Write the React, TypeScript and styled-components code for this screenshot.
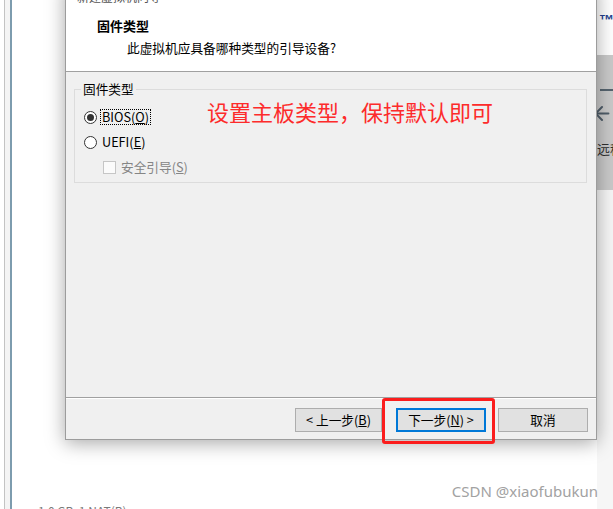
import React from "react";
import styled, { createGlobalStyle } from "styled-components";
import { ArrowLeft } from "lucide-react";

const GlobalStyle = createGlobalStyle`
  html, body {
    margin: 0;
    padding: 0;
    background: #ffffff;
    overflow: hidden;
  }
  body {
    font-family: "Noto Sans CJK SC", "Noto Sans", sans-serif;
  }
  * { box-sizing: border-box; }
`;

const UI_FONT = `"Noto Sans CJK SC", "Noto Sans", sans-serif`;

const Page = styled.div`
  position: relative;
  width: 613px;
  height: 509px;
  overflow: hidden;
  display: flex;
  background: #ffffff;
`;

/* ---------- background window ---------- */
const OuterRail = styled.div`
  margin-left: 4px;
  width: 6px;
  border-left: 1px solid #c3c3c3;
  background: #f4f4f4;
  flex: none;
`;

const InnerRail = styled.div`
  width: 2px;
  background: #7d9cae;
  flex: none;
`;

const BackContent = styled.div`
  flex: 1;
  display: flex;
  flex-direction: column;
  justify-content: flex-end;
  padding-left: 26px;
  background: #ffffff;
`;

const BackText = styled.div`
  font-family: ${UI_FONT};
  font-size: 12px;
  line-height: 16px;
  color: #7a7a7a;
  margin-bottom: -10px;
  white-space: nowrap;
`;

const RightPanel = styled.div`
  width: 16px;
  flex: none;
  display: flex;
  flex-direction: column;
  overflow: hidden;
`;

const LogoArea = styled.div`
  height: 55px;
  background: #ffffff;
  padding: 6px 0 0 2px;
`;

const Trademark = styled.span`
  font-family: "Liberation Sans", sans-serif;
  font-size: 15px;
  font-weight: 700;
  color: #23408e;
  line-height: 16px;
`;

const GrayPanel = styled.div`
  height: 135px;
  background: #c9c9c9;
  display: flex;
  flex-direction: column;
  padding-left: 3px;
`;

const DarkBar = styled.div`
  margin-top: 34px;
  height: 2px;
  background: #56646f;
`;

const ArrowBox = styled.div`
  margin-top: 9px;
  margin-left: -9px;
  height: 27px;
  color: #4f5d69;
  display: flex;
`;

const PanelLabel = styled.div`
  margin-top: 14px;
  margin-left: -3px;
  font-family: ${UI_FONT};
  font-size: 13px;
  line-height: 16px;
  color: #2f2f2f;
  white-space: nowrap;
`;

const PanelRest = styled.div`
  flex: 1;
  background: #f6f6f6;
`;

/* ---------- dialog window ---------- */
const Dialog = styled.div`
  position: absolute;
  left: 65px;
  top: -19px;
  width: 532px;
  height: 459px;
  border: 1px solid #9c9c9c;
  background: #f0f0f0;
  box-shadow: 0 3px 18px rgba(0, 0, 0, 0.35);
  display: flex;
  flex-direction: column;
  font-family: ${UI_FONT};
  font-size: 12.7px;
  color: #000;
`;

const TitleBar = styled.div`
  height: 30px;
  flex: none;
  background: #ffffff;
  padding-left: 11px;
  line-height: 30px;
  font-size: 12px;
  color: #555;
`;

const Header = styled.div`
  flex: none;
  height: 60px;
  background: #ffffff;
  border-bottom: 1px solid #a0a0a0;
  padding: 6px 0 0 31px;
  display: flex;
  flex-direction: column;
  gap: 6px;
`;

const HeaderTitle = styled.div`
  font-size: 13px;
  font-weight: 700;
  line-height: 16px;
`;

const HeaderSubtitle = styled.div`
  line-height: 16px;
  padding-left: 30px;
`;

const Body = styled.div`
  flex: 1;
  padding: 9px 9px 0 8px;
  border-bottom: 1px solid #a0a0a0;
`;

const Group = styled.fieldset`
  margin: 0;
  padding: 0;
  border: 1px solid #dcdcdc;
  min-inline-size: 0;
`;

const Legend = styled.legend`
  margin-left: 6px;
  padding: 0 2px;
  line-height: 16px;
`;

const Options = styled.div`
  display: flex;
  flex-direction: column;
  padding: 7.5px 0 2px 9px;
`;

const Row = styled.div<{ $indent?: number }>`
  height: 25px;
  display: flex;
  align-items: center;
  padding-left: ${(p) => p.$indent ?? 0}px;
`;

const RadioCircle = styled.span<{ $checked?: boolean }>`
  width: 13px;
  height: 13px;
  border-radius: 50%;
  border: 1px solid #333333;
  background: #ffffff;
  display: flex;
  align-items: center;
  justify-content: center;
  flex: none;
  &::after {
    content: "";
    width: 7px;
    height: 7px;
    border-radius: 50%;
    background: ${(p) => (p.$checked ? "#333333" : "transparent")};
  }
`;

const CheckBox = styled.span`
  width: 13px;
  height: 13px;
  border: 1px solid #c6c6c6;
  background: #fbfbfb;
  flex: none;
`;

const OptionLabel = styled.span<{ $focus?: boolean; $disabled?: boolean }>`
  margin-left: 3px;
  padding: 0 1px;
  line-height: 14px;
  border: 1px dotted ${(p) => (p.$focus ? "#000" : "transparent")};
  color: ${(p) => (p.$disabled ? "#858585" : "#000")};
`;

const Footer = styled.div`
  flex: none;
  height: 41px;
  border-top: 1px solid #ffffff;
  display: flex;
  justify-content: flex-end;
  align-items: flex-start;
  padding: 9px 8px 0 0;
`;

const Button = styled.div<{ $width: number; $gap: number; $primary?: boolean }>`
  width: ${(p) => p.$width}px;
  height: 24px;
  margin-left: ${(p) => p.$gap}px;
  background: #e1e1e1;
  border: ${(p) => (p.$primary ? "2px solid #0078d7" : "1px solid #adadad")};
  display: flex;
  align-items: center;
  justify-content: center;
  white-space: nowrap;
  line-height: 16px;
  color: #000;
`;

/* ---------- annotations drawn on the screenshot ---------- */
const Annotation = styled.div`
  position: absolute;
  left: 207px;
  top: 98px;
  font-family: ${UI_FONT};
  font-size: 22px;
  line-height: 26px;
  color: #fd2b2b;
  white-space: nowrap;
`;

const Highlight = styled.div`
  position: absolute;
  left: 382px;
  top: 398px;
  width: 113px;
  height: 46px;
  border: 3px solid #fb1d1d;
  border-radius: 3px;
`;

const Watermark = styled.div`
  position: absolute;
  right: 15px;
  top: 481px;
  font-family: "Noto Sans", sans-serif;
  font-size: 15px;
  line-height: 20px;
  color: #a2a2a2;
  white-space: nowrap;
`;

export default function App() {
  return (
    <>
      <GlobalStyle />
      <Page>
        <OuterRail />
        <InnerRail />
        <BackContent>
          <BackText>1.0 GB&nbsp;&nbsp;1 NAT(B)</BackText>
        </BackContent>
        <RightPanel>
          <LogoArea>
            <Trademark>™</Trademark>
          </LogoArea>
          <GrayPanel>
            <DarkBar />
            <ArrowBox>
              <ArrowLeft size={27} strokeWidth={2.2} />
            </ArrowBox>
            <PanelLabel>远程</PanelLabel>
          </GrayPanel>
          <PanelRest />
        </RightPanel>

        <Dialog>
          <TitleBar>新建虚拟机向导</TitleBar>
          <Header>
            <HeaderTitle>固件类型</HeaderTitle>
            <HeaderSubtitle>此虚拟机应具备哪种类型的引导设备?</HeaderSubtitle>
          </Header>
          <Body>
            <Group>
              <Legend>固件类型</Legend>
              <Options>
                <Row>
                  <RadioCircle $checked />
                  <OptionLabel $focus>
                    BIOS(<u>O</u>)
                  </OptionLabel>
                </Row>
                <Row>
                  <RadioCircle />
                  <OptionLabel>
                    UEFI(<u>E</u>)
                  </OptionLabel>
                </Row>
                <Row $indent={19}>
                  <CheckBox />
                  <OptionLabel $disabled>
                    安全引导(<u>S</u>)
                  </OptionLabel>
                </Row>
              </Options>
            </Group>
          </Body>
          <Footer>
            <Button $width={87} $gap={0}>
              &lt; 上一步(<u>B</u>)
            </Button>
            <Button $width={90} $gap={14} $primary>
              下一步(<u>N</u>) &gt;
            </Button>
            <Button $width={90} $gap={12}>
              取消
            </Button>
          </Footer>
        </Dialog>

        <Annotation>设置主板类型，保持默认即可</Annotation>
        <Highlight />
        <Watermark>CSDN @xiaofubukun</Watermark>
      </Page>
    </>
  );
}
